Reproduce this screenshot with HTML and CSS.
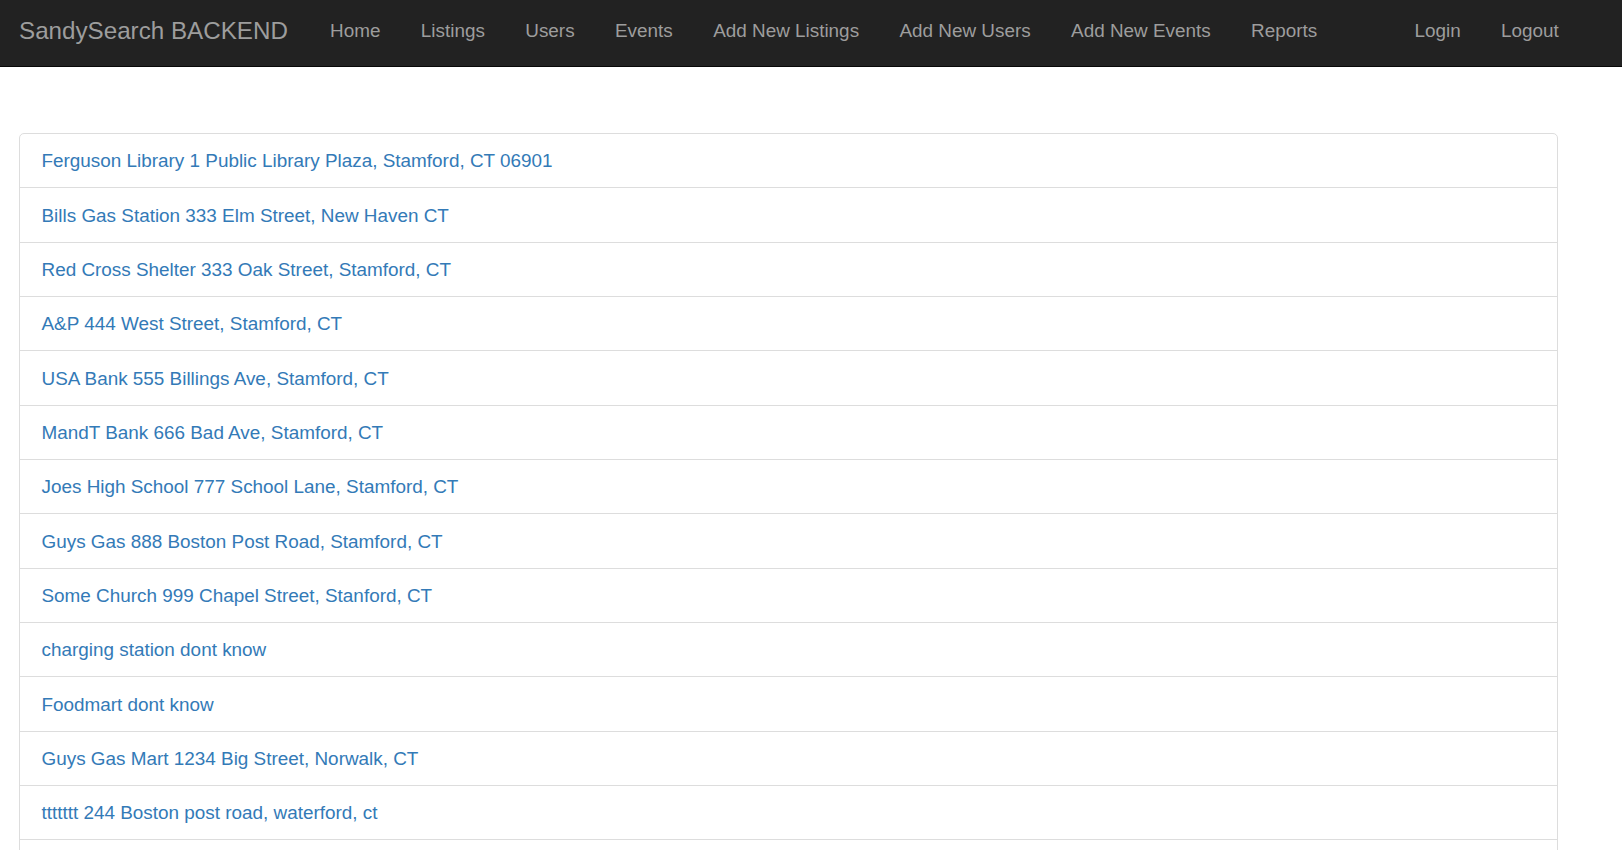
FILE: index.html
```html
<!DOCTYPE html>
<html lang="en">
<head>
<meta charset="utf-8">
<title>SandySearch BACKEND</title>
<link rel="stylesheet" href="styles.css">
</head>
<body>
<nav class="navbar">
  <div class="navbar-inner">
    <a class="brand" href="#">SandySearch BACKEND</a>
    <ul class="nav">
      <li><a href="#">Home</a></li>
      <li><a href="#">Listings</a></li>
      <li><a href="#">Users</a></li>
      <li><a href="#">Events</a></li>
      <li><a href="#">Add New Listings</a></li>
      <li><a href="#">Add New Users</a></li>
      <li><a href="#">Add New Events</a></li>
      <li><a href="#">Reports</a></li>
    </ul>
    <ul class="nav nav-right">
      <li><a href="#">Login</a></li>
      <li><a href="#">Logout</a></li>
    </ul>
  </div>
</nav>
<main class="container">
  <div class="list-group">
    <a class="list-group-item" href="#">Ferguson Library 1 Public Library Plaza, Stamford, CT 06901</a>
    <a class="list-group-item" href="#">Bills Gas Station 333 Elm Street, New Haven CT</a>
    <a class="list-group-item" href="#">Red Cross Shelter 333 Oak Street, Stamford, CT</a>
    <a class="list-group-item" href="#">A&amp;P 444 West Street, Stamford, CT</a>
    <a class="list-group-item" href="#">USA Bank 555 Billings Ave, Stamford, CT</a>
    <a class="list-group-item" href="#">MandT Bank 666 Bad Ave, Stamford, CT</a>
    <a class="list-group-item" href="#">Joes High School 777 School Lane, Stamford, CT</a>
    <a class="list-group-item" href="#">Guys Gas 888 Boston Post Road, Stamford, CT</a>
    <a class="list-group-item" href="#">Some Church 999 Chapel Street, Stanford, CT</a>
    <a class="list-group-item" href="#">charging station dont know</a>
    <a class="list-group-item" href="#">Foodmart dont know</a>
    <a class="list-group-item" href="#">Guys Gas Mart 1234 Big Street, Norwalk, CT</a>
    <a class="list-group-item" href="#">ttttttt 244 Boston post road, waterford, ct</a>
    <a class="list-group-item" href="#">&nbsp;</a>
  </div>
</main>
</body>
</html>
```

FILE: styles.css
```css
html {
  overflow: hidden;
}
body {
  margin: 0;
  background: #fff;
  font-family: "Liberation Sans", Arial, Helvetica, sans-serif;
  font-size: 18.9px;
  line-height: 26.67px;
  color: #333;
}
a {
  text-decoration: none;
}
.navbar {
  background: #222;
  border-bottom: 1px solid #080808;
  height: 66px;
}
.navbar-inner {
  display: flex;
  align-items: stretch;
  width: 1579px;
  height: 66px;
}
.brand {
  display: block;
  padding: 0 22px 0 19px;
  font-size: 24.2px;
  line-height: 62px;
  color: #9d9d9d;
}
.nav {
  display: flex;
  margin: 0;
  padding: 0;
  list-style: none;
}
.nav li a {
  display: block;
  padding: 0 20.2px;
  line-height: 62px;
  color: #9d9d9d;
}
.nav-right {
  margin-left: auto;
}
.container {
  width: 1539px;
  padding: 66px 20px 0 19px;
}
.list-group {
  display: flex;
  flex-direction: column;
}
.list-group-item {
  display: block;
  padding: 14.33px 20px 12.33px 21.5px;
  border: 1px solid #ddd;
  margin-bottom: -1px;
  color: #337ab7;
  background: #fff;
}
.list-group-item:first-child {
  border-top-left-radius: 5px;
  border-top-right-radius: 5px;
}
```
